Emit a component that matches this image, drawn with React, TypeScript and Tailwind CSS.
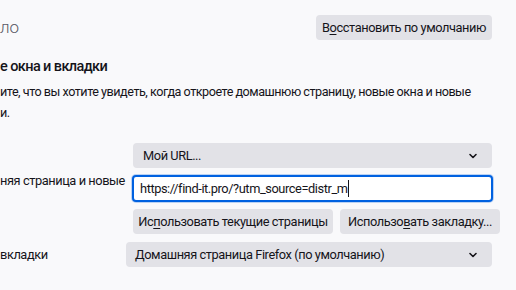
import { ChevronDown } from 'lucide-react';

const font = { fontFamily: 'Roboto, "Noto Sans", sans-serif' };

const GrayButton = ({ children, className = '' }: { children: React.ReactNode; className?: string }) => (
  <div className={`h-[25px] rounded-[4px] bg-[#e2e2e7] flex items-center px-[8px] text-[12.8px] tracking-[-0.42px] whitespace-nowrap ${className}`}>
    {children}
  </div>
);

export default function App() {
  return (
    <div
      className="w-[516px] h-[290px] overflow-hidden bg-[#f9f9fb] text-[#15141a] whitespace-nowrap"
      style={font}
    >
      {/* header row */}
      <div className="flex items-center justify-between pt-[15px] pr-[24px]">
        <span className="text-[17px] font-light text-[#5b5b66] leading-none">ло</span>
        <GrayButton className="w-[176px] justify-center">
          <span>
            В<u className="underline-offset-2">о</u>сстановить по умолчанию
          </span>
        </GrayButton>
      </div>

      {/* section */}
      <h2 className="mt-[17px] text-[14.5px] font-medium tracking-[-0.6px] leading-[20px]">е окна и вкладки</h2>
      <p className="mt-[4px] text-[12.6px] tracking-[-0.47px] leading-[21px]">
        ите, что вы хотите увидеть, когда откроете домашнюю страницу, новые окна и новые
        <br />
        и.
      </p>

      <div className="mt-[20px] flex flex-col">
        <div className="flex">
          <div className="w-[133px] shrink-0 pt-[28px] text-[12.8px] tracking-[-0.42px] leading-[20px]">
            няя страница и новые
          </div>
          <div className="w-[359px] flex flex-col gap-[7px]">
            <GrayButton className="justify-between pl-[10px] pr-[13px]">
              <span>Мой URL...</span>
              <ChevronDown size={12} strokeWidth={3.2} />
            </GrayButton>
            <div className="h-[27px] -mx-[1px] rounded-[4px] border-2 border-[#0061e0] bg-white flex items-center px-[6px] text-[12.8px] tracking-[-0.42px] shadow-[0_0_0_1px_rgba(0,97,224,0.25)]">
              <span>https://find-it.pro/?utm_source=distr_m</span>
              <span className="w-px h-[17px] bg-[#15141a]" />
            </div>
            <div className="flex gap-[7px]">
              <GrayButton className="w-[200px] justify-center">
                <span>
                  Ис<u className="underline-offset-2">п</u>ользовать текущие страницы
                </span>
              </GrayButton>
              <GrayButton className="flex-1 justify-center">
                <span>
                  Использо<u className="underline-offset-2">в</u>ать закладку...
                </span>
              </GrayButton>
            </div>
          </div>
        </div>

        <div className="flex mt-[8px] items-center">
          <div className="w-[126px] shrink-0 text-[12.8px] tracking-[-0.42px] leading-[20px]">вкладки</div>
          <GrayButton className="w-[366px] justify-between pl-[9px] pr-[13px]">
            <span>Домашняя страница Firefox (по умолчанию)</span>
            <ChevronDown size={12} strokeWidth={3.2} />
          </GrayButton>
        </div>
      </div>
    </div>
  );
}
